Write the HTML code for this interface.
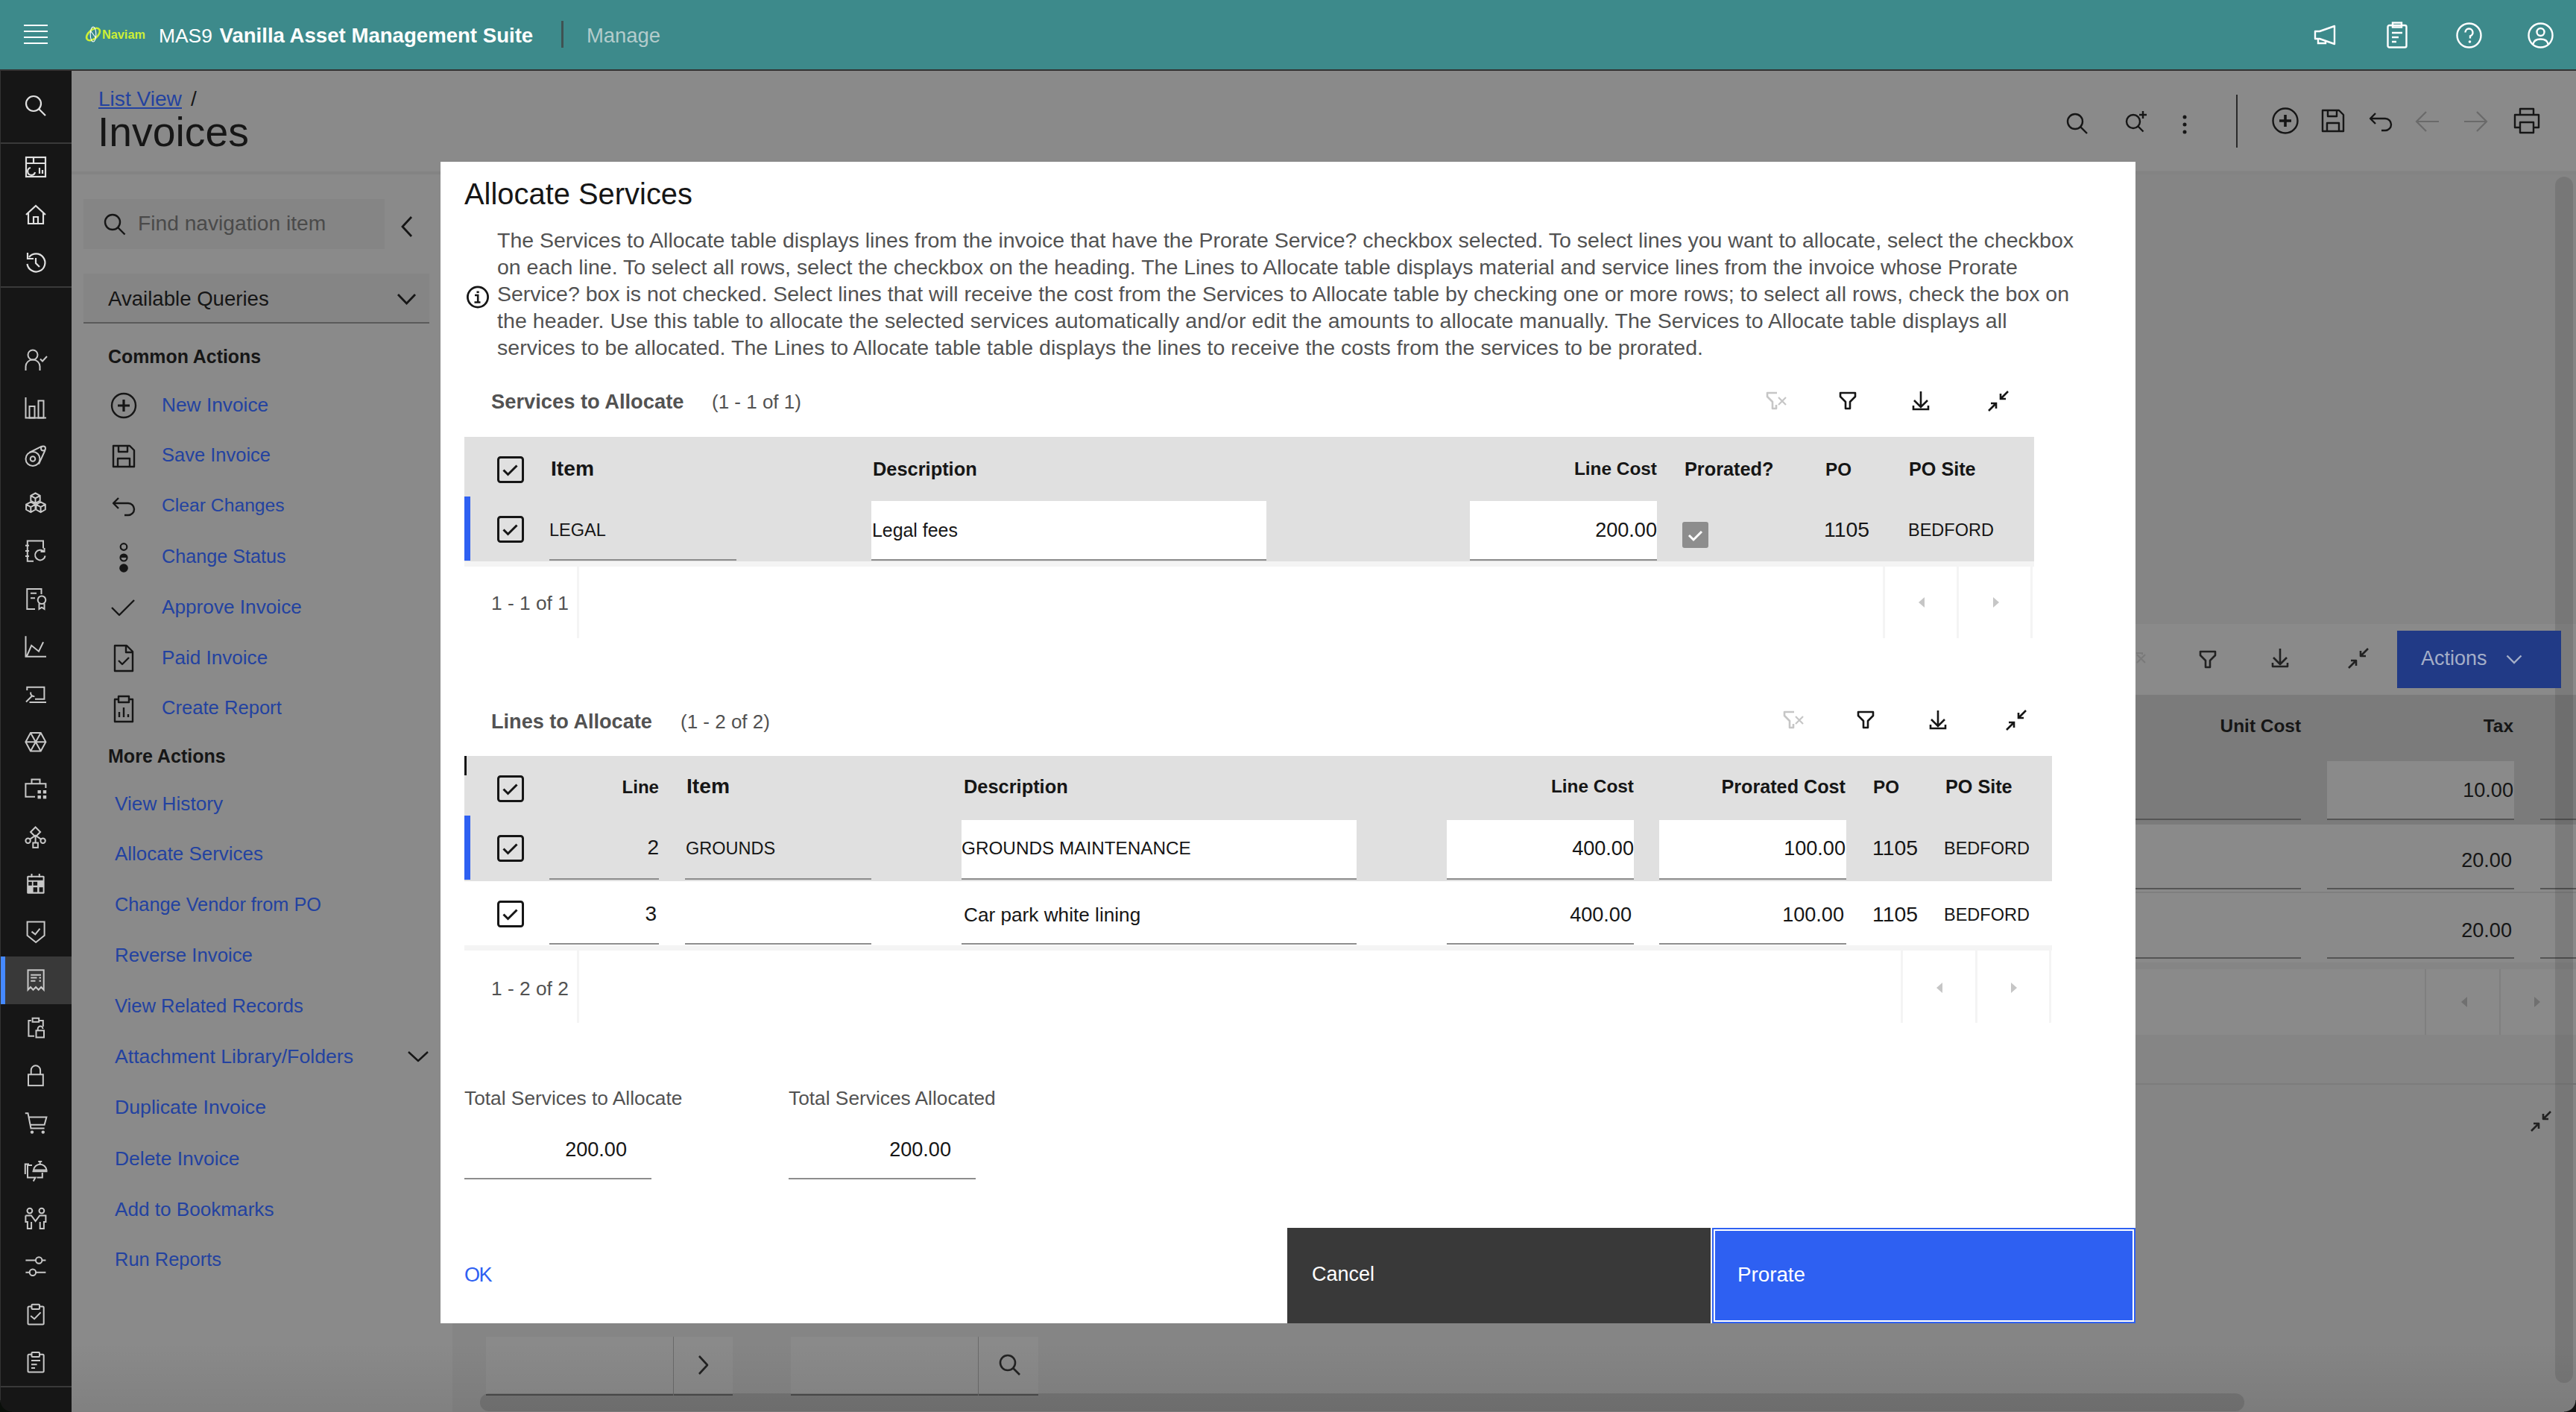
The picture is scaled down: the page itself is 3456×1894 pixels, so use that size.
<!DOCTYPE html>
<html><head><meta charset="utf-8"><title>Allocate Services</title>
<style>
html,body{margin:0;padding:0;}
body{width:3456px;height:1894px;overflow:hidden;position:relative;background:#858585;font-family:"Liberation Sans",sans-serif;}
.t{position:absolute;white-space:nowrap;line-height:1;}
svg{overflow:visible}
@media (max-width:2400px){html{zoom:0.5}}
</style></head><body>
<div style="position:absolute;left:0px;top:0px;width:3456px;height:93px;background:#3d8a8b;"></div><div style="position:absolute;left:0px;top:93px;width:3456px;height:2px;background:#333333;"></div><div style="position:absolute;left:0px;top:95px;width:96px;height:1799px;background:#161616;"></div><div style="position:absolute;left:0px;top:191px;width:96px;height:2px;background:#393939;"></div><div style="position:absolute;left:0px;top:384px;width:96px;height:2px;background:#393939;"></div><div style="position:absolute;left:0px;top:1283px;width:96px;height:64px;background:#393939;"></div><div style="position:absolute;left:0px;top:1283px;width:7px;height:64px;background:#4589ff;"></div><div style="position:absolute;left:0px;top:1859px;width:96px;height:2px;background:#393939;"></div><div style="position:absolute;left:96px;top:95px;width:3360px;height:134px;background:#8a8a8a;"></div><div style="position:absolute;left:96px;top:229px;width:511px;height:1665px;background:#8a8a8a;"></div><div style="position:absolute;left:96px;top:230px;width:3360px;height:4px;background:#838383;"></div><div style="position:absolute;left:607px;top:234px;width:2849px;height:1660px;background:#858585;"></div><div style="position:absolute;left:112px;top:267px;width:404px;height:67px;background:#858585;"></div><div style="position:absolute;left:112px;top:367px;width:464px;height:67px;background:#858585;"></div><div style="position:absolute;left:112px;top:432px;width:464px;height:2px;background:#5a5a5a;"></div><div style="position:absolute;left:2865px;top:837px;width:591px;height:95px;background:#8a8a8a;"></div><div style="position:absolute;left:2865px;top:932px;width:591px;height:88px;background:#7b7b7b;"></div><div style="position:absolute;left:2865px;top:1020px;width:591px;height:86px;background:#7b7b7b;"></div><div style="position:absolute;left:3122px;top:1021px;width:251px;height:79px;background:#8a8a8a;"></div><div style="position:absolute;left:2865px;top:1106px;width:591px;height:90px;background:#8a8a8a;"></div><div style="position:absolute;left:2865px;top:1196px;width:591px;height:2px;background:#7f7f7f;"></div><div style="position:absolute;left:2865px;top:1198px;width:591px;height:93px;background:#8a8a8a;"></div><div style="position:absolute;left:2865px;top:1291px;width:591px;height:9px;background:#858585;"></div><div style="position:absolute;left:2865px;top:1300px;width:591px;height:88px;background:#8a8a8a;"></div><div style="position:absolute;left:652px;top:1793px;width:251px;height:79px;background:#8a8a8a;"></div><div style="position:absolute;left:903px;top:1793px;width:80px;height:79px;background:#8a8a8a;"></div><div style="position:absolute;left:1061px;top:1793px;width:251px;height:79px;background:#8a8a8a;"></div><div style="position:absolute;left:1312px;top:1793px;width:81px;height:79px;background:#8a8a8a;"></div><div style="position:absolute;left:644px;top:1869px;width:2367px;height:24px;background:#757575;border-radius:12px;"></div><div style="position:absolute;left:591px;top:217px;width:2274px;height:1558px;background:#ffffff;"></div><div class="t" style="left:623px;top:241.2px;font-size:39.9px;color:#161616;">Allocate Services</div><div class="t" style="left:667px;top:307.9px;font-size:28.5px;color:#525252;letter-spacing:-0.015px;">The Services to Allocate table displays lines from the invoice that have the Prorate Service? checkbox selected. To select lines you want to allocate, select the checkbox</div><div class="t" style="left:667px;top:343.9px;font-size:28.5px;color:#525252;letter-spacing:0.002px;">on each line. To select all rows, select the checkbox on the heading. The Lines to Allocate table displays material and service lines from the invoice whose Prorate</div><div class="t" style="left:667px;top:379.9px;font-size:28.5px;color:#525252;letter-spacing:-0.015px;">Service? box is not checked. Select lines that will receive the cost from the Services to Allocate table by checking one or more rows; to select all rows, check the box on</div><div class="t" style="left:667px;top:415.9px;font-size:28.5px;color:#525252;letter-spacing:0.08px;">the header. Use this table to allocate the selected services automatically and/or edit the amounts to allocate manually. The Services to Allocate table displays all</div><div class="t" style="left:667px;top:451.9px;font-size:28.5px;color:#525252;letter-spacing:0.032px;">services to be allocated. The Lines to Allocate table table displays the lines to receive the costs from the services to be prorated.</div><svg style="position:absolute;left:625px;top:383px;" width="32" height="32" viewBox="0 0 32 32"><circle cx="16" cy="15.5" r="13.6" fill="none" stroke="#161616" stroke-width="2.8"/><rect x="14.5" y="7.5" width="3.2" height="2.6" fill="#161616"/><path d="M12 13h4.2v9.5M11.5 22.5h8" fill="none" stroke="#161616" stroke-width="2.6"/></svg><div class="t" style="left:659px;top:524.9px;font-size:27.3px;color:#525252;font-weight:700;">Services to Allocate</div><div class="t" style="left:955px;top:526.0px;font-size:26px;color:#525252;">(1 - 1 of 1)</div><svg style="position:absolute;left:2369px;top:525px;" width="30" height="26" viewBox="0 0 30 26"><path d="M15 2H2v5l7 7v9h5v-5" fill="none" stroke="#c6c6c6" stroke-width="2.6" stroke-linejoin="round"/><path d="M17 8l10 10M27 8L17 18" stroke="#c6c6c6" stroke-width="2.2"/></svg><svg style="position:absolute;left:2467px;top:525px;" width="24" height="26" viewBox="0 0 24 26"><path d="M2 2h20v5l-7 7v9h-6v-9L2 7z" fill="none" stroke="#161616" stroke-width="2.6" stroke-linejoin="round"/></svg><svg style="position:absolute;left:2565px;top:524px;" width="24" height="28" viewBox="0 0 24 28"><path d="M12 1v21M3 13l9 9 9-9M2 20v5h20v-5" fill="none" stroke="#161616" stroke-width="2.6"/></svg><svg style="position:absolute;left:2667px;top:524px;" width="28" height="28" viewBox="0 0 28 28"><path d="M27 1L17 11M17 4v7h7M1 27l10-10M4 17h7v7" fill="none" stroke="#161616" stroke-width="2.6"/></svg><div style="position:absolute;left:623px;top:586px;width:2106px;height:80px;background:#e0e0e0;"></div><div style="position:absolute;left:623px;top:666px;width:2106px;height:87px;background:#e0e0e0;"></div><div style="position:absolute;left:623px;top:753px;width:2106px;height:7px;background:#f4f4f4;"></div><div style="position:absolute;left:623px;top:666px;width:8px;height:86px;background:#2e60f2;"></div><svg style="position:absolute;left:667px;top:612px;" width="36" height="36" viewBox="0 0 36 36"><rect x="1.5" y="1.5" width="33" height="33" rx="3" fill="none" stroke="#161616" stroke-width="3"/><path d="M8.5 18.5l6 6 12-12" fill="none" stroke="#161616" stroke-width="3"/></svg><svg style="position:absolute;left:667px;top:692px;" width="36" height="36" viewBox="0 0 36 36"><rect x="1.5" y="1.5" width="33" height="33" rx="3" fill="none" stroke="#161616" stroke-width="3"/><path d="M8.5 18.5l6 6 12-12" fill="none" stroke="#161616" stroke-width="3"/></svg><div class="t" style="left:739px;top:614.1px;font-size:28.2px;color:#161616;font-weight:700;">Item</div><div class="t" style="left:1171px;top:616.5px;font-size:25.4px;color:#161616;font-weight:700;">Description</div><div class="t" style="left:1023px;width:1200px;text-align:right;top:617.3px;font-size:24.4px;color:#161616;font-weight:700;">Line Cost</div><div class="t" style="left:2260px;top:616.6px;font-size:25.3px;color:#161616;font-weight:700;">Prorated?</div><div class="t" style="left:2449px;top:617.5px;font-size:24.2px;color:#161616;font-weight:700;">PO</div><div class="t" style="left:2561px;top:616.7px;font-size:25.2px;color:#161616;font-weight:700;">PO Site</div><div style="position:absolute;left:737px;top:750px;width:251px;height:2px;background:#8d8d8d;"></div><div style="position:absolute;left:1169px;top:672px;width:530px;height:80px;background:#ffffff;"></div><div style="position:absolute;left:1169px;top:750px;width:530px;height:2px;background:#8d8d8d;"></div><div style="position:absolute;left:1972px;top:672px;width:251px;height:80px;background:#ffffff;"></div><div style="position:absolute;left:1972px;top:750px;width:251px;height:2px;background:#8d8d8d;"></div><div class="t" style="left:737px;top:700.1px;font-size:23.5px;color:#161616;">LEGAL</div><div class="t" style="left:1170px;top:698.9px;font-size:24.9px;color:#161616;">Legal fees</div><div class="t" style="left:1023px;width:1200px;text-align:right;top:697.1px;font-size:27.1px;color:#161616;">200.00</div><svg style="position:absolute;left:2257px;top:700px;" width="35" height="35" viewBox="0 0 35 35"><rect x="0" y="0" width="35" height="35" rx="3" fill="#8d8d8d"/><path d="M9 18l6 6 11-11" fill="none" stroke="#ffffff" stroke-width="3"/></svg><div class="t" style="left:2447px;top:696.0px;font-size:28.4px;color:#161616;">1105</div><div class="t" style="left:2560px;top:700.1px;font-size:23.5px;color:#161616;">BEDFORD</div><div style="position:absolute;left:774px;top:760px;width:3px;height:96px;background:#f4f4f4;"></div><div style="position:absolute;left:2526px;top:760px;width:3px;height:96px;background:#f4f4f4;"></div><div style="position:absolute;left:2625px;top:760px;width:3px;height:96px;background:#f4f4f4;"></div><div style="position:absolute;left:2724px;top:760px;width:3px;height:96px;background:#f4f4f4;"></div><div class="t" style="left:659px;top:795.7px;font-size:26.3px;color:#525252;">1 - 1 of 1</div><svg style="position:absolute;left:2572px;top:800px;" width="12" height="16" viewBox="0 0 12 16"><path d="M10 1L2 8l8 7z" fill="#c6c6c6"/></svg><svg style="position:absolute;left:2672px;top:800px;" width="12" height="16" viewBox="0 0 12 16"><path d="M2 1l8 7-8 7z" fill="#c6c6c6"/></svg><div class="t" style="left:659px;top:954.1px;font-size:27.1px;color:#525252;font-weight:700;">Lines to Allocate</div><div class="t" style="left:913px;top:955.0px;font-size:26px;color:#525252;">(1 - 2 of 2)</div><svg style="position:absolute;left:2392px;top:953px;" width="30" height="26" viewBox="0 0 30 26"><path d="M15 2H2v5l7 7v9h5v-5" fill="none" stroke="#c6c6c6" stroke-width="2.6" stroke-linejoin="round"/><path d="M17 8l10 10M27 8L17 18" stroke="#c6c6c6" stroke-width="2.2"/></svg><svg style="position:absolute;left:2491px;top:953px;" width="24" height="26" viewBox="0 0 24 26"><path d="M2 2h20v5l-7 7v9h-6v-9L2 7z" fill="none" stroke="#161616" stroke-width="2.6" stroke-linejoin="round"/></svg><svg style="position:absolute;left:2588px;top:952px;" width="24" height="28" viewBox="0 0 24 28"><path d="M12 1v21M3 13l9 9 9-9M2 20v5h20v-5" fill="none" stroke="#161616" stroke-width="2.6"/></svg><svg style="position:absolute;left:2691px;top:952px;" width="28" height="28" viewBox="0 0 28 28"><path d="M27 1L17 11M17 4v7h7M1 27l10-10M4 17h7v7" fill="none" stroke="#161616" stroke-width="2.6"/></svg><div style="position:absolute;left:623px;top:1014px;width:2130px;height:80px;background:#e0e0e0;"></div><div style="position:absolute;left:623px;top:1094px;width:2130px;height:88px;background:#e0e0e0;"></div><div style="position:absolute;left:623px;top:1268px;width:2130px;height:7px;background:#f4f4f4;"></div><div style="position:absolute;left:623px;top:1094px;width:8px;height:86px;background:#2e60f2;"></div><div style="position:absolute;left:623px;top:1014px;width:3px;height:26px;background:#161616;"></div><svg style="position:absolute;left:667px;top:1040px;" width="36" height="36" viewBox="0 0 36 36"><rect x="1.5" y="1.5" width="33" height="33" rx="3" fill="none" stroke="#161616" stroke-width="3"/><path d="M8.5 18.5l6 6 12-12" fill="none" stroke="#161616" stroke-width="3"/></svg><svg style="position:absolute;left:667px;top:1120px;" width="36" height="36" viewBox="0 0 36 36"><rect x="1.5" y="1.5" width="33" height="33" rx="3" fill="none" stroke="#161616" stroke-width="3"/><path d="M8.5 18.5l6 6 12-12" fill="none" stroke="#161616" stroke-width="3"/></svg><svg style="position:absolute;left:667px;top:1208px;" width="36" height="36" viewBox="0 0 36 36"><rect x="1.5" y="1.5" width="33" height="33" rx="3" fill="none" stroke="#161616" stroke-width="3"/><path d="M8.5 18.5l6 6 12-12" fill="none" stroke="#161616" stroke-width="3"/></svg><div class="t" style="left:-316px;width:1200px;text-align:right;top:1043.6px;font-size:24.1px;color:#161616;font-weight:700;">Line</div><div class="t" style="left:921px;top:1040.1px;font-size:28.2px;color:#161616;font-weight:700;">Item</div><div class="t" style="left:1293px;top:1042.5px;font-size:25.4px;color:#161616;font-weight:700;">Description</div><div class="t" style="left:992px;width:1200px;text-align:right;top:1043.3px;font-size:24.4px;color:#161616;font-weight:700;">Line Cost</div><div class="t" style="left:1276px;width:1200px;text-align:right;top:1042.7px;font-size:25.2px;color:#161616;font-weight:700;">Prorated Cost</div><div class="t" style="left:2513px;top:1043.5px;font-size:24.2px;color:#161616;font-weight:700;">PO</div><div class="t" style="left:2610px;top:1042.7px;font-size:25.2px;color:#161616;font-weight:700;">PO Site</div><div style="position:absolute;left:737px;top:1178px;width:147px;height:2px;background:#8d8d8d;"></div><div style="position:absolute;left:919px;top:1178px;width:250px;height:2px;background:#8d8d8d;"></div><div style="position:absolute;left:1290px;top:1100px;width:530px;height:80px;background:#ffffff;"></div><div style="position:absolute;left:1290px;top:1178px;width:530px;height:2px;background:#8d8d8d;"></div><div style="position:absolute;left:1941px;top:1100px;width:251px;height:80px;background:#ffffff;"></div><div style="position:absolute;left:1941px;top:1178px;width:251px;height:2px;background:#8d8d8d;"></div><div style="position:absolute;left:2226px;top:1100px;width:251px;height:80px;background:#ffffff;"></div><div style="position:absolute;left:2226px;top:1178px;width:251px;height:2px;background:#8d8d8d;"></div><div class="t" style="left:-316px;width:1200px;text-align:right;top:1123.3px;font-size:28px;color:#161616;">2</div><div class="t" style="left:920px;top:1127.1px;font-size:23.5px;color:#161616;">GROUNDS</div><div class="t" style="left:1290px;top:1126.4px;font-size:24.3px;color:#161616;">GROUNDS MAINTENANCE</div><div class="t" style="left:992px;width:1200px;text-align:right;top:1124.1px;font-size:27.1px;color:#161616;">400.00</div><div class="t" style="left:1276px;width:1200px;text-align:right;top:1124.1px;font-size:27.1px;color:#161616;">100.00</div><div class="t" style="left:2512px;top:1123.0px;font-size:28.4px;color:#161616;">1105</div><div class="t" style="left:2608px;top:1127.1px;font-size:23.5px;color:#161616;">BEDFORD</div><div style="position:absolute;left:737px;top:1265px;width:147px;height:2px;background:#8d8d8d;"></div><div style="position:absolute;left:919px;top:1265px;width:250px;height:2px;background:#8d8d8d;"></div><div style="position:absolute;left:1290px;top:1265px;width:530px;height:2px;background:#8d8d8d;"></div><div style="position:absolute;left:1941px;top:1265px;width:251px;height:2px;background:#8d8d8d;"></div><div style="position:absolute;left:2226px;top:1265px;width:251px;height:2px;background:#8d8d8d;"></div><div class="t" style="left:-319px;width:1200px;text-align:right;top:1212.3px;font-size:28px;color:#161616;">3</div><div class="t" style="left:1293px;top:1213.8px;font-size:26.2px;color:#161616;">Car park white lining</div><div class="t" style="left:989px;width:1200px;text-align:right;top:1213.1px;font-size:27.1px;color:#161616;">400.00</div><div class="t" style="left:1274px;width:1200px;text-align:right;top:1213.1px;font-size:27.1px;color:#161616;">100.00</div><div class="t" style="left:2512px;top:1212.0px;font-size:28.4px;color:#161616;">1105</div><div class="t" style="left:2608px;top:1216.1px;font-size:23.5px;color:#161616;">BEDFORD</div><div style="position:absolute;left:774px;top:1275px;width:3px;height:97px;background:#f4f4f4;"></div><div style="position:absolute;left:2550px;top:1275px;width:3px;height:97px;background:#f4f4f4;"></div><div style="position:absolute;left:2650px;top:1275px;width:3px;height:97px;background:#f4f4f4;"></div><div style="position:absolute;left:2749px;top:1275px;width:3px;height:97px;background:#f4f4f4;"></div><div class="t" style="left:659px;top:1312.7px;font-size:26.3px;color:#525252;">1 - 2 of 2</div><svg style="position:absolute;left:2596px;top:1317px;" width="12" height="16" viewBox="0 0 12 16"><path d="M10 1L2 8l8 7z" fill="#c6c6c6"/></svg><svg style="position:absolute;left:2696px;top:1317px;" width="12" height="16" viewBox="0 0 12 16"><path d="M2 1l8 7-8 7z" fill="#c6c6c6"/></svg><div class="t" style="left:623px;top:1459.7px;font-size:26.3px;color:#525252;">Total Services to Allocate</div><div class="t" style="left:1058px;top:1459.7px;font-size:26.3px;color:#525252;">Total Services Allocated</div><div class="t" style="left:-359px;width:1200px;text-align:right;top:1528.1px;font-size:27.1px;color:#161616;">200.00</div><div class="t" style="left:76px;width:1200px;text-align:right;top:1528.1px;font-size:27.1px;color:#161616;">200.00</div><div style="position:absolute;left:623px;top:1580px;width:251px;height:2px;background:#8d8d8d;"></div><div style="position:absolute;left:1058px;top:1580px;width:251px;height:2px;background:#8d8d8d;"></div><div class="t" style="left:623px;top:1697.1px;font-size:27px;color:#2e60f2;letter-spacing:-1.5px;">OK</div><div style="position:absolute;left:1727px;top:1647px;width:568px;height:128px;background:#393939;"></div><div class="t" style="left:1760px;top:1696.1px;font-size:27px;color:#ffffff;">Cancel</div><div style="position:absolute;left:2297px;top:1647px;width:568px;height:128px;background:#2e60f2;"></div><div style="position:absolute;left:2299px;top:1649px;width:564px;height:124px;background:none;border:2px solid #ffffff;box-sizing:border-box;"></div><div class="t" style="left:2331px;top:1695.5px;font-size:27.75px;color:#ffffff;">Prorate</div><div style="position:absolute;left:32px;top:33px;width:32px;height:2px;background:#ffffff;"></div><div style="position:absolute;left:32px;top:41px;width:32px;height:2px;background:#ffffff;"></div><div style="position:absolute;left:32px;top:49px;width:32px;height:2px;background:#ffffff;"></div><div style="position:absolute;left:32px;top:57px;width:32px;height:2px;background:#ffffff;"></div><svg style="position:absolute;left:113px;top:35px;" width="24" height="22" viewBox="0 0 24 22"><ellipse cx="12" cy="11" rx="10.5" ry="6" transform="rotate(-40 12 11)" fill="none" stroke="#ccef35" stroke-width="2.6"/><ellipse cx="12" cy="11" rx="3.8" ry="10" fill="none" stroke="#ffffff" stroke-width="1.1"/><path d="M9 7l6 8" stroke="#ffffff" stroke-width="1.1"/></svg><div class="t" style="left:137px;top:37.7px;font-size:16.3px;color:#ccef35;font-weight:700;">Naviam</div><div class="t" style="left:213px;top:35.2px;font-size:26.4px;color:#ffffff;">MAS9</div><div class="t" style="left:294.5px;top:34.1px;font-size:27.6px;color:#ffffff;font-weight:700;">Vanilla Asset Management Suite</div><div style="position:absolute;left:753px;top:28px;width:3px;height:36px;background:#3f5252;"></div><div class="t" style="left:787px;top:34.3px;font-size:27.4px;color:#b3cccc;">Manage</div><svg style="position:absolute;left:3104px;top:33px;" width="32" height="28" viewBox="0 0 32 28"><path d="M2 9h6l20-7v24L8 19H2z" fill="none" stroke="#ffffff" stroke-width="2.4" stroke-linejoin="round"/><path d="M6 19v6h10v-4" fill="none" stroke="#ffffff" stroke-width="2.4"/></svg><svg style="position:absolute;left:3202px;top:29px;" width="28" height="36" viewBox="0 0 28 36"><rect x="1.5" y="5" width="25" height="29.5" rx="2" fill="none" stroke="#ffffff" stroke-width="2.4"/><rect x="8" y="1.5" width="12" height="6" fill="none" stroke="#ffffff" stroke-width="2.4"/><path d="M7 15h14M7 21h9M7 27h6" stroke="#ffffff" stroke-width="2.4"/></svg><svg style="position:absolute;left:3295px;top:30px;" width="35" height="35" viewBox="0 0 35 35"><circle cx="17.5" cy="17.5" r="16" fill="none" stroke="#ffffff" stroke-width="2.4"/><path d="M12.5 13.5a5 5 0 1 1 6.5 4.8v3.2" fill="none" stroke="#ffffff" stroke-width="2.4"/><circle cx="18.5" cy="26" r="1.8" fill="#ffffff"/></svg><svg style="position:absolute;left:3391px;top:30px;" width="35" height="35" viewBox="0 0 35 35"><circle cx="17.5" cy="17.5" r="16" fill="none" stroke="#ffffff" stroke-width="2.4"/><circle cx="17.5" cy="13" r="5" fill="none" stroke="#ffffff" stroke-width="2.4"/><path d="M7.5 29c1-5 4.5-6.5 10-6.5s9 1.5 10 6.5" fill="none" stroke="#ffffff" stroke-width="2.4"/></svg><svg style="position:absolute;left:33.0px;top:127.0px;" width="30" height="30" viewBox="0 0 30 30"><circle cx="12" cy="12" r="10" stroke-width="2.2" fill="none" stroke="#e0e0e0"/><path d="M19 19l9 9" stroke-width="2.2" fill="none" stroke="#e0e0e0"/></svg><svg style="position:absolute;left:33.0px;top:209.0px;" width="30" height="30" viewBox="0 0 30 30"><rect x="2" y="2" width="26" height="26" stroke-width="2.2" fill="none" stroke="#e0e0e0"/><path d="M2 10h26M12 2v8M20 16v8M24 19v5" stroke-width="2.2" fill="none" stroke="#e0e0e0"/><path d="M14 22a5 5 0 1 1-6-6" stroke-width="2.2" fill="none" stroke="#e0e0e0"/></svg><svg style="position:absolute;left:33.0px;top:273.0px;" width="30" height="30" viewBox="0 0 30 30"><path d="M2 15L15 3l13 12M5 13v14h20V13M12 27v-9h6v9" stroke-width="2.2" fill="none" stroke="#e0e0e0"/></svg><svg style="position:absolute;left:33.0px;top:337.0px;" width="30" height="30" viewBox="0 0 30 30"><path d="M6 8a12 12 0 1 1-2.5 9" stroke-width="2.2" fill="none" stroke="#e0e0e0"/><path d="M4 2v8h8M15 9v7l5 5" stroke-width="2.2" fill="none" stroke="#e0e0e0"/></svg><svg style="position:absolute;left:33.0px;top:468.0px;" width="30" height="30" viewBox="0 0 30 30"><circle cx="11" cy="8" r="6.5" stroke-width="2" fill="none" stroke="#c8c8c8"/><path d="M1.5 29v-5.5a9.5 9 0 0 1 19 0V29M21 13.5l3 3 6-6.5" stroke-width="2" fill="none" stroke="#c8c8c8"/></svg><svg style="position:absolute;left:33.0px;top:531.95px;" width="30" height="30" viewBox="0 0 30 30"><path d="M1.5 1v27.5H29" stroke-width="2" fill="none" stroke="#c8c8c8"/><rect x="6.5" y="13" width="7" height="15.5" stroke-width="2" fill="none" stroke="#c8c8c8"/><rect x="18.5" y="5.5" width="7" height="23" stroke-width="2" fill="none" stroke="#c8c8c8"/></svg><svg style="position:absolute;left:33.0px;top:595.9px;" width="30" height="30" viewBox="0 0 30 30"><circle cx="11" cy="19.5" r="9.5" stroke-width="2" fill="none" stroke="#c8c8c8"/><circle cx="11" cy="19.5" r="3.3" stroke-width="2" fill="none" stroke="#c8c8c8"/><circle cx="25" cy="5.5" r="3" stroke-width="2" fill="none" stroke="#c8c8c8"/><path d="M6.5 11L23 2.6M19 26.5L27.5 8" stroke-width="2" fill="none" stroke="#c8c8c8"/></svg><svg style="position:absolute;left:33.0px;top:659.85px;" width="30" height="30" viewBox="0 0 30 30"><path d="M14.5 1.5l6.2 3.4v6.8l-6.2 3.4-6.2-3.4V4.9zM8.3 4.9l6.2 3.4 6.2-3.4M14.5 8.3v6.8" stroke-width="2" fill="none" stroke="#c8c8c8"/><path d="M8.3 13.3l6.2 3.4v6.8L8.3 27l-6.2-3.5v-6.8zM2.1 16.7l6.2 3.4 6.2-3.4M8.3 20.1V27" stroke-width="2" fill="none" stroke="#c8c8c8"/><path d="M21.6 13.3l6.2 3.4v6.8L21.6 27l-6.2-3.5v-6.8zM15.4 16.7l6.2 3.4 6.2-3.4M21.6 20.1V27" stroke-width="2" fill="none" stroke="#c8c8c8"/></svg><svg style="position:absolute;left:33.0px;top:723.8px;" width="30" height="30" viewBox="0 0 30 30"><path d="M25 11.5V1.6H3.8v27.1H12M1 7.8h5M1 14.9h5M1 22h5" stroke-width="2" fill="none" stroke="#c8c8c8"/><path d="M27.6 21.5a6.8 6.8 0 1 1-1.8-5.6M26.5 11v5h-5" stroke-width="2" fill="none" stroke="#c8c8c8"/></svg><svg style="position:absolute;left:33.0px;top:787.75px;" width="30" height="30" viewBox="0 0 30 30"><path d="M22.5 9V2.1H3.3V29H14M8 7.7h8M8 14.3h6M19.5 21.5v7.5l3.5-2.3 3.5 2.3v-7.5" stroke-width="2" fill="none" stroke="#c8c8c8"/><circle cx="23" cy="16.8" r="5.3" stroke-width="2" fill="none" stroke="#c8c8c8"/></svg><svg style="position:absolute;left:33.0px;top:851.7px;" width="30" height="30" viewBox="0 0 30 30"><path d="M1.5 1.3v27.5H29M3 28l6.2-14.2 9.8 7.9 6.1-12.4" stroke-width="2" fill="none" stroke="#c8c8c8"/></svg><svg style="position:absolute;left:33.0px;top:915.6500000000001px;" width="30" height="30" viewBox="0 0 30 30"><path d="M3.3 10V5.7h23.1v16H14M6.5 26.1H29M2 25.5l8.5-8.5M8.3 12.5a4.3 4.3 0 0 0 5 5.5" stroke-width="2" fill="none" stroke="#c8c8c8"/></svg><svg style="position:absolute;left:33.0px;top:979.6px;" width="30" height="30" viewBox="0 0 30 30"><path d="M1.4 15.2L8 3h13.7l6.7 12.2-6.7 12.2H8zM1.4 15.2h27M8 3l13.7 24.4M21.7 3L8 27.4" stroke-width="2" fill="none" stroke="#c8c8c8"/></svg><svg style="position:absolute;left:33.0px;top:1043.5500000000002px;" width="30" height="30" viewBox="0 0 30 30"><path d="M14 24.8H1.4V7.3h27V13M9.5 7.3V1.5h11v5.8" stroke-width="2" fill="none" stroke="#c8c8c8"/><rect x="17.5" y="16" width="4.4" height="4.4" fill="#c8c8c8"/><rect x="24.8" y="16" width="4.4" height="4.4" fill="#c8c8c8"/><rect x="17.5" y="23" width="4.4" height="4.4" fill="#c8c8c8"/><rect x="24.8" y="23" width="4.4" height="4.4" fill="#c8c8c8"/></svg><svg style="position:absolute;left:33.0px;top:1107.5px;" width="30" height="30" viewBox="0 0 30 30"><path d="M14.6 1.5l6.5 6.5-6.5 6.5L8.1 8zM14.6 14.5v8M7.2 17.7l7.4-5 7.4 5" stroke-width="2" fill="none" stroke="#c8c8c8"/><circle cx="4.6" cy="19.8" r="3.2" stroke-width="2" fill="none" stroke="#c8c8c8"/><circle cx="24.6" cy="19.8" r="3.2" stroke-width="2" fill="none" stroke="#c8c8c8"/><rect x="11.3" y="22.5" width="6.6" height="6.4" stroke-width="2" fill="none" stroke="#c8c8c8"/></svg><svg style="position:absolute;left:33.0px;top:1171.45px;" width="30" height="30" viewBox="0 0 30 30"><rect x="3.2" y="3.8" width="23.4" height="24" rx="1.5" fill="#c8c8c8"/><rect x="5.2" y="5.8" width="19.4" height="4" fill="#161616"/><rect x="5.2" y="11.8" width="4.6" height="5" fill="#161616"/><rect x="11.6" y="11.8" width="5.5" height="5" fill="#161616"/><rect x="11.6" y="19.2" width="5.5" height="6.4" fill="#161616"/><rect x="19.6" y="19.2" width="5" height="6.4" fill="#161616"/><path d="M9.5 1v5M19.8 1v5" stroke-width="2" fill="none" stroke="#c8c8c8"/></svg><svg style="position:absolute;left:33.0px;top:1235.4px;" width="30" height="30" viewBox="0 0 30 30"><path d="M3.6 1.6h23v18.2L15.1 29 3.6 19.8zM9.5 14.6l4.8 3.7 6.2-7.7" stroke-width="2" fill="none" stroke="#c8c8c8"/></svg><svg style="position:absolute;left:33.0px;top:1299.35px;" width="30" height="30" viewBox="0 0 30 30"><path d="M4.5 28.8V2.3h21.2v26.5l-3.5-3.8-3.5 3.8-3.6-3.8-3.6 3.8-3.5-3.8zM8.2 8.7H22M8.2 12.4h8.3M19.5 12.4h2.5M8.2 16.7h6.3M19.5 16.7h2.5" stroke-width="2" fill="none" stroke="#c8c8c8"/></svg><svg style="position:absolute;left:33.0px;top:1363.3000000000002px;" width="30" height="30" viewBox="0 0 30 30"><path d="M13 26.7H5.4V6h3.4M19.8 6h5V14M10.6 2.7h8.6v5H10.6z" stroke-width="2" fill="none" stroke="#c8c8c8"/><rect x="15.5" y="19.3" width="10.5" height="9.2" stroke-width="2" fill="none" stroke="#c8c8c8"/><path d="M17.7 19.3v-2.3a3.4 3.4 0 0 1 6.8 0" stroke-width="2" fill="none" stroke="#c8c8c8"/></svg><svg style="position:absolute;left:33.0px;top:1427.25px;" width="30" height="30" viewBox="0 0 30 30"><rect x="5" y="14.3" width="19.8" height="14.8" stroke-width="2" fill="none" stroke="#c8c8c8"/><path d="M8.7 14.3V8.5a6.2 6.2 0 0 1 12.4 0v5.8" stroke-width="2" fill="none" stroke="#c8c8c8"/></svg><svg style="position:absolute;left:33.0px;top:1491.2px;" width="30" height="30" viewBox="0 0 30 30"><path d="M0.8 2.2h3.7l4 20.3h18.1M5 7.4h24.4l-2.8 10.4H7.3" stroke-width="2" fill="none" stroke="#c8c8c8"/><circle cx="10" cy="27.6" r="2.2" fill="#c8c8c8"/><circle cx="24.8" cy="27.6" r="2.2" fill="#c8c8c8"/></svg><svg style="position:absolute;left:33.0px;top:1555.15px;" width="30" height="30" viewBox="0 0 30 30"><path d="M6 6.5H0.8V20M10 8H4v16.5h10.5l-2.8 5M16.5 24.5h7.3v-6.5" stroke-width="2" fill="none" stroke="#c8c8c8"/><path d="M12 14.5a8.8 8.8 0 0 1 17.5 0z" stroke-width="2" fill="none" stroke="#c8c8c8"/><path d="M10.5 16.2H30.5M20.7 3.5v2.5M18.3 3h5" stroke-width="2" fill="none" stroke="#c8c8c8"/></svg><svg style="position:absolute;left:33.0px;top:1619.1000000000001px;" width="30" height="30" viewBox="0 0 30 30"><circle cx="6.9" cy="5.1" r="3.4" stroke-width="2" fill="none" stroke="#c8c8c8"/><circle cx="22.9" cy="5.1" r="3.4" stroke-width="2" fill="none" stroke="#c8c8c8"/><path d="M1.4 11.5H9l5.6 7.5 5.6-7.5h8.2V20h-2.5v9h-5.2v-9M1.4 11.5V20h2.5v9h5.2v-9" stroke-width="2" fill="none" stroke="#c8c8c8"/></svg><svg style="position:absolute;left:33.0px;top:1683.05px;" width="30" height="30" viewBox="0 0 30 30"><path d="M1.4 7.5H28.4M1.4 23.7H28.4" stroke-width="2" fill="none" stroke="#c8c8c8"/><circle cx="19.2" cy="7.5" r="4.2" fill="#161616" stroke="#c8c8c8" stroke-width="2"/><circle cx="10.9" cy="23.7" r="4.2" fill="#161616" stroke="#c8c8c8" stroke-width="2"/></svg><svg style="position:absolute;left:33.0px;top:1747.0px;" width="30" height="30" viewBox="0 0 30 30"><rect x="4.5" y="5.5" width="21.2" height="23.9" rx="1.5" stroke-width="2" fill="none" stroke="#c8c8c8"/><rect x="9.5" y="2.8" width="10.5" height="6.1" rx="1" fill="#161616" stroke="#c8c8c8" stroke-width="2"/><path d="M8.2 18l4.9 4.2 8.5-8.8" stroke-width="2" fill="none" stroke="#c8c8c8"/></svg><svg style="position:absolute;left:33.0px;top:1810.95px;" width="30" height="30" viewBox="0 0 30 30"><rect x="4.5" y="5.7" width="21.2" height="23.9" rx="1.5" stroke-width="2" fill="none" stroke="#c8c8c8"/><rect x="9.5" y="2.9" width="10.5" height="6.2" rx="1" fill="#161616" stroke="#c8c8c8" stroke-width="2"/><path d="M9 14H21M9 19.3h7.6M9 24.1H14" stroke-width="2" fill="none" stroke="#c8c8c8"/></svg><div class="t" style="left:132px;top:119.2px;font-size:28.1px;color:#2342a0;">List View</div><div style="position:absolute;left:132px;top:144px;width:112px;height:2px;background:#2342a0;"></div><div class="t" style="left:256px;top:119.3px;font-size:28px;color:#161616;">/</div><div class="t" style="left:131px;top:150.2px;font-size:55.3px;color:#161616;">Invoices</div><svg style="position:absolute;left:2772px;top:151px;" width="30" height="30" viewBox="0 0 30 30"><circle cx="12" cy="12" r="10" fill="none" stroke="#161616" stroke-width="2.4" stroke-linejoin="round"/><path d="M19 19l9 9" fill="none" stroke="#161616" stroke-width="2.4" stroke-linejoin="round"/></svg><svg style="position:absolute;left:2850px;top:146px;" width="34" height="34" viewBox="0 0 34 34"><circle cx="12" cy="17" r="9" fill="none" stroke="#161616" stroke-width="2.4" stroke-linejoin="round"/><path d="M18.5 23.5l7 7M25 3v10M20 8h10" fill="none" stroke="#161616" stroke-width="2.4" stroke-linejoin="round"/></svg><svg style="position:absolute;left:2926px;top:154px;" width="10" height="26" viewBox="0 0 10 26"><circle cx="5" cy="3" r="2.5" fill="#161616"/><circle cx="5" cy="13" r="2.5" fill="#161616"/><circle cx="5" cy="23" r="2.5" fill="#161616"/></svg><div style="position:absolute;left:3000px;top:127px;width:2px;height:71px;background:#2a2a2a;"></div><svg style="position:absolute;left:3048px;top:144px;" width="36" height="36" viewBox="0 0 36 36"><circle cx="18" cy="18" r="16.5" fill="none" stroke="#161616" stroke-width="2.4" stroke-linejoin="round"/><path d="M18 10v16M10 18h16" fill="none" stroke="#161616" stroke-width="3.6"/></svg><svg style="position:absolute;left:3114px;top:146px;" width="32" height="32" viewBox="0 0 32 32"><path d="M2 2h22l6 6v22H2z" fill="none" stroke="#161616" stroke-width="2.4" stroke-linejoin="round"/><path d="M9 2v8h12V2M8 30V19h16v11" fill="none" stroke="#161616" stroke-width="2.4" stroke-linejoin="round"/></svg><svg style="position:absolute;left:3176px;top:150px;" width="36" height="28" viewBox="0 0 36 28"><path d="M4 9h20a8 8 0 0 1 0 16h-5M11 2L4 9l7 7" fill="none" stroke="#161616" stroke-width="2.4" stroke-linejoin="round"/></svg><svg style="position:absolute;left:3240px;top:148px;" width="34" height="30" viewBox="0 0 34 30"><path d="M32 15H3M15 2L2 15l13 13" fill="none" stroke="#6a6a6a" stroke-width="2.2"/></svg><svg style="position:absolute;left:3304px;top:148px;" width="34" height="30" viewBox="0 0 34 30"><path d="M2 15h29M19 2l13 13-13 13" fill="none" stroke="#6a6a6a" stroke-width="2.2"/></svg><svg style="position:absolute;left:3372px;top:144px;" width="36" height="36" viewBox="0 0 36 36"><path d="M9 10V2h18v8M8 27H2V10h32v17h-6M9 20h18v14H9z" fill="none" stroke="#161616" stroke-width="2.4" stroke-linejoin="round" stroke-width="2.8"/></svg><svg style="position:absolute;left:139px;top:286px;" width="30" height="30" viewBox="0 0 30 30"><circle cx="12" cy="12" r="10" fill="none" stroke="#161616" stroke-width="2.4" stroke-linejoin="round"/><path d="M19.5 19.5l9 9" fill="none" stroke="#161616" stroke-width="2.4" stroke-linejoin="round"/></svg><div class="t" style="left:185px;top:285.1px;font-size:28.2px;color:#4a4a4a;">Find navigation item</div><svg style="position:absolute;left:537px;top:289px;" width="18" height="30" viewBox="0 0 18 30"><path d="M15 2L3 15l12 13" fill="none" stroke="#161616" stroke-width="2.8"/></svg><div class="t" style="left:145px;top:386.6px;font-size:27.6px;color:#161616;">Available Queries</div><svg style="position:absolute;left:532px;top:393px;" width="27" height="17" viewBox="0 0 27 17"><path d="M2 2l11.5 12L25 2" fill="none" stroke="#161616" stroke-width="2.8"/></svg><div class="t" style="left:145px;top:466.4px;font-size:24.9px;color:#161616;font-weight:700;">Common Actions</div><div class="t" style="left:217px;top:529.7px;font-size:26.3px;color:#2342a0;">New Invoice</div><div class="t" style="left:217px;top:598.4px;font-size:25.5px;color:#2342a0;">Save Invoice</div><div class="t" style="left:217px;top:666.1px;font-size:24.7px;color:#2342a0;">Clear Changes</div><div class="t" style="left:217px;top:733.7px;font-size:25.2px;color:#2342a0;">Change Status</div><div class="t" style="left:217px;top:800.8px;font-size:26.2px;color:#2342a0;">Approve Invoice</div><div class="t" style="left:217px;top:868.9px;font-size:26.1px;color:#2342a0;">Paid Invoice</div><div class="t" style="left:217px;top:937.3px;font-size:25.6px;color:#2342a0;">Create Report</div><svg style="position:absolute;left:148px;top:526px;" width="36" height="36" viewBox="0 0 36 36"><circle cx="18" cy="18" r="16" fill="none" stroke="#161616" stroke-width="2.4" stroke-linejoin="round"/><path d="M18 10v16M10 18h16" fill="none" stroke="#161616" stroke-width="3.2"/></svg><svg style="position:absolute;left:150px;top:596px;" width="32" height="32" viewBox="0 0 32 32"><path d="M2 2h22l6 6v22H2z" fill="none" stroke="#161616" stroke-width="2.4" stroke-linejoin="round"/><path d="M9 2v8h12V2M8 30V19h16v11" fill="none" stroke="#161616" stroke-width="2.4" stroke-linejoin="round"/></svg><svg style="position:absolute;left:148px;top:667px;" width="36" height="26" viewBox="0 0 36 26"><path d="M4 8h20a8 8 0 0 1 0 16h-5M11 1L4 8l7 7" fill="none" stroke="#161616" stroke-width="2.4" stroke-linejoin="round"/></svg><svg style="position:absolute;left:156px;top:727px;" width="20" height="42" viewBox="0 0 20 42"><circle cx="10" cy="6.5" r="4.3" fill="none" stroke="#161616" stroke-width="2.2"/><circle cx="10" cy="21" r="4.5" fill="none" stroke="#161616" stroke-width="2.2"/><path d="M5.5 21a4.5 4.5 0 0 1 9 0z" fill="#161616"/><circle cx="10" cy="35" r="5.8" fill="#161616"/></svg><svg style="position:absolute;left:148px;top:803px;" width="34" height="24" viewBox="0 0 34 24"><path d="M2 12l10 10L32 2" fill="none" stroke="#161616" stroke-width="2.4" stroke-linejoin="round"/></svg><svg style="position:absolute;left:152px;top:864px;" width="28" height="38" viewBox="0 0 28 38"><path d="M2 2h16l8 8v26H2zM17 2v9h9M7 22l5 5 9-9" fill="none" stroke="#161616" stroke-width="2.4" stroke-linejoin="round"/></svg><svg style="position:absolute;left:150px;top:932px;" width="32" height="38" viewBox="0 0 32 38"><path d="M22 6h6v30H4V6h6M9 2h14v8H9zM10 30v-7M16 30V17M22 30v-4" fill="none" stroke="#161616" stroke-width="2.4" stroke-linejoin="round"/></svg><div class="t" style="left:145px;top:1002.3px;font-size:25.05px;color:#161616;font-weight:700;">More Actions</div><div class="t" style="left:154px;top:1064.8px;font-size:26.2px;color:#2342a0;">View History</div><div class="t" style="left:154px;top:1133.0px;font-size:25.95px;color:#2342a0;">Allocate Services</div><div class="t" style="left:154px;top:1200.6px;font-size:25.3px;color:#2342a0;">Change Vendor from PO</div><div class="t" style="left:154px;top:1269.2px;font-size:25.8px;color:#2342a0;">Reverse Invoice</div><div class="t" style="left:154px;top:1337.3px;font-size:25.6px;color:#2342a0;">View Related Records</div><div class="t" style="left:154px;top:1404.4px;font-size:26.66px;color:#2342a0;">Attachment Library/Folders</div><div class="t" style="left:154px;top:1472.4px;font-size:26.66px;color:#2342a0;">Duplicate Invoice</div><div class="t" style="left:154px;top:1540.6px;font-size:26.45px;color:#2342a0;">Delete Invoice</div><div class="t" style="left:154px;top:1608.9px;font-size:26.14px;color:#2342a0;">Add to Bookmarks</div><div class="t" style="left:154px;top:1677.4px;font-size:25.47px;color:#2342a0;">Run Reports</div><svg style="position:absolute;left:546px;top:1409px;" width="30" height="16" viewBox="0 0 30 16"><path d="M2 2l13 12L28 2" fill="none" stroke="#161616" stroke-width="2.4" stroke-linejoin="round"/></svg><svg style="position:absolute;left:2950px;top:872px;" width="24" height="26" viewBox="0 0 24 26"><path d="M2 2h20v5l-7 7v9h-6v-9L2 7z" fill="none" stroke="#222" stroke-width="2.6" stroke-linejoin="round"/></svg><svg style="position:absolute;left:3047px;top:869px;" width="24" height="28" viewBox="0 0 24 28"><path d="M12 1v21M3 13l9 9 9-9M2 20v5h20v-5" fill="none" stroke="#222" stroke-width="2.6" stroke-linejoin="round"/></svg><svg style="position:absolute;left:3150px;top:869px;" width="28" height="28" viewBox="0 0 28 28"><path d="M27 1L17 11M17 4v7h7M1 27l10-10M4 17h7v7" fill="none" stroke="#222" stroke-width="2.6" stroke-linejoin="round"/></svg><svg style="position:absolute;left:2866px;top:874px;" width="16" height="20" viewBox="0 0 16 20"><path d="M1 4l11 11M12 4L1 15" fill="none" stroke="#7a7a7a" stroke-width="2"/><path d="M0 2h8v2" fill="none" stroke="#7a7a7a" stroke-width="2"/></svg><div class="t" style="left:1887px;width:1200px;text-align:right;top:962.3px;font-size:24.4px;color:#161616;font-weight:700;">Unit Cost</div><div class="t" style="left:2172px;width:1200px;text-align:right;top:962.3px;font-size:24.4px;color:#161616;font-weight:700;">Tax</div><div style="position:absolute;left:2865px;top:1098px;width:222px;height:2px;background:#555555;"></div><div style="position:absolute;left:3122px;top:1098px;width:251px;height:2px;background:#555555;"></div><div style="position:absolute;left:3408px;top:1098px;width:48px;height:2px;background:#555555;"></div><div style="position:absolute;left:2865px;top:1191px;width:222px;height:2px;background:#555555;"></div><div style="position:absolute;left:3122px;top:1191px;width:251px;height:2px;background:#555555;"></div><div style="position:absolute;left:3408px;top:1191px;width:48px;height:2px;background:#555555;"></div><div style="position:absolute;left:2865px;top:1284px;width:222px;height:2px;background:#555555;"></div><div style="position:absolute;left:3122px;top:1284px;width:251px;height:2px;background:#555555;"></div><div style="position:absolute;left:3408px;top:1284px;width:48px;height:2px;background:#555555;"></div><div class="t" style="left:2172px;width:1200px;text-align:right;top:1046.1px;font-size:27.1px;color:#161616;">10.00</div><div class="t" style="left:2170px;width:1200px;text-align:right;top:1140.1px;font-size:27.1px;color:#161616;">20.00</div><div class="t" style="left:2170px;width:1200px;text-align:right;top:1234.1px;font-size:27.1px;color:#161616;">20.00</div><div style="position:absolute;left:3253px;top:1300px;width:2px;height:88px;background:#7f7f7f;"></div><div style="position:absolute;left:3353px;top:1300px;width:2px;height:88px;background:#7f7f7f;"></div><svg style="position:absolute;left:3300px;top:1336px;" width="12" height="16" viewBox="0 0 12 16"><path d="M10 1L2 8l8 7z" fill="#707070"/></svg><svg style="position:absolute;left:3398px;top:1336px;" width="12" height="16" viewBox="0 0 12 16"><path d="M2 1l8 7-8 7z" fill="#707070"/></svg><div style="position:absolute;left:3428px;top:237px;width:24px;height:1618px;background:rgba(0,0,0,0.1);border-radius:12px;"></div><div style="position:absolute;left:3216px;top:846px;width:220px;height:77px;background:#213a86;"></div><div class="t" style="left:3248px;top:870.1px;font-size:27px;color:#a4aec8;">Actions</div><svg style="position:absolute;left:3362px;top:878px;" width="22" height="13" viewBox="0 0 22 13"><path d="M1.5 1.5l9.5 9.5 9.5-9.5" fill="none" stroke="#a4aec8" stroke-width="2.4"/></svg><svg style="position:absolute;left:3395px;top:1490px;" width="28" height="28" viewBox="0 0 28 28"><path d="M27 1L17 11M17 4v7h7M1 27l10-10M4 17h7v7" fill="none" stroke="#222" stroke-width="2.6" stroke-linejoin="round"/></svg><div style="position:absolute;left:652px;top:1870px;width:331px;height:2px;background:#4a4a4a;"></div><div style="position:absolute;left:1061px;top:1870px;width:332px;height:2px;background:#4a4a4a;"></div><div style="position:absolute;left:903px;top:1793px;width:1px;height:79px;background:#6a6a6a;"></div><div style="position:absolute;left:1312px;top:1793px;width:1px;height:79px;background:#6a6a6a;"></div><svg style="position:absolute;left:935px;top:1817px;" width="18" height="28" viewBox="0 0 18 28"><path d="M3 2l11 12L3 26" fill="none" stroke="#222" stroke-width="2.6" stroke-linejoin="round"/></svg><svg style="position:absolute;left:1340px;top:1816px;" width="30" height="30" viewBox="0 0 30 30"><circle cx="12" cy="12" r="10" fill="none" stroke="#222" stroke-width="2.6" stroke-linejoin="round"/><path d="M19 19l9 9" fill="none" stroke="#222" stroke-width="2.6" stroke-linejoin="round"/></svg><div style="position:absolute;left:96px;top:1800px;width:3360px;height:94px;background:linear-gradient(rgba(0,0,0,0),rgba(0,0,0,0.07));"></div><div style="position:absolute;left:2865px;top:1453px;width:563px;height:2px;background:#7c7c7c;"></div><div style="position:absolute;left:3428px;top:1453px;width:28px;height:2px;background:#707070;"></div><div style="position:absolute;left:3440px;top:1878px;width:16px;height:16px;background:radial-gradient(circle at 0 0, rgba(0,0,0,0) 15px, #111 16px);"></div><div style="position:absolute;left:0px;top:95px;width:1px;height:1799px;background:#333333;"></div><div style="position:absolute;left:0px;top:1878px;width:16px;height:16px;background:radial-gradient(circle at 100% 0, rgba(0,0,0,0) 15px, #0a0f0a 16px);"></div>
</body></html>
